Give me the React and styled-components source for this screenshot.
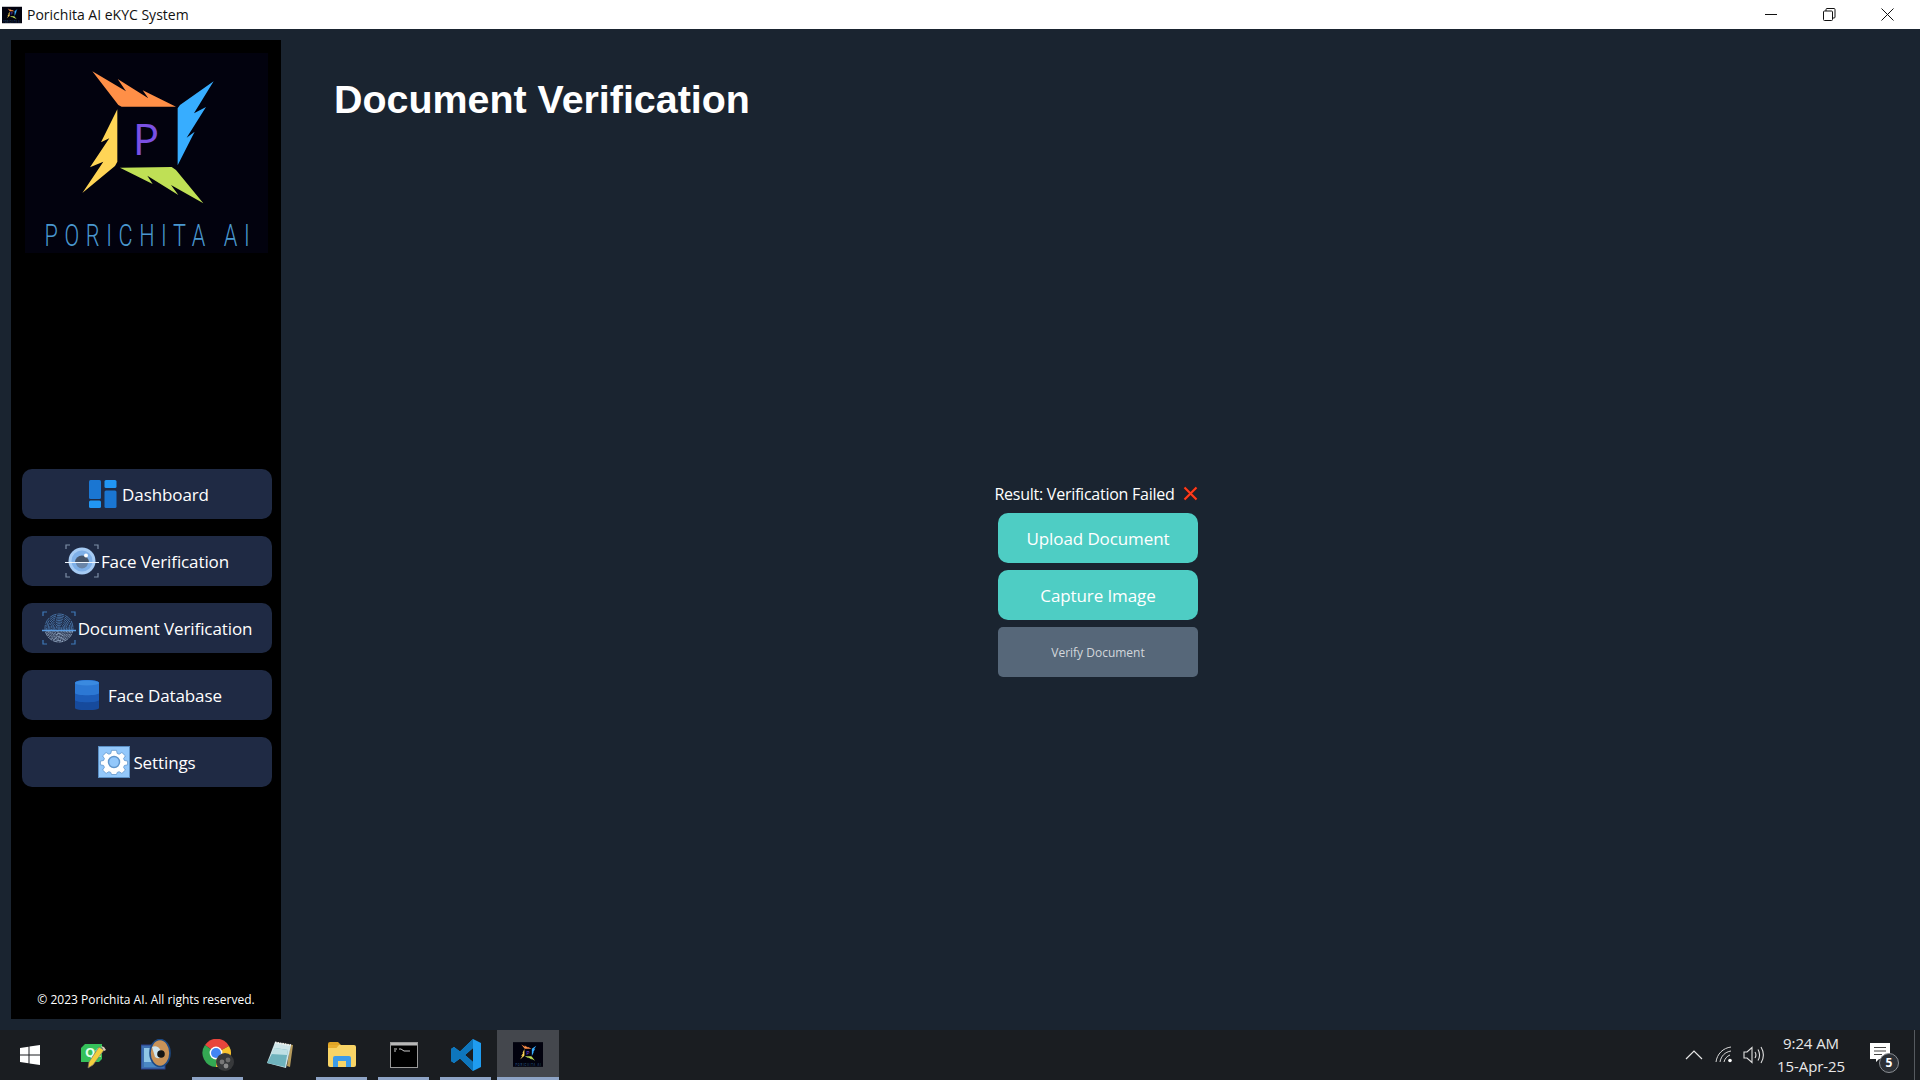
import React from "react";
import styled, { createGlobalStyle } from "styled-components";

const Global = createGlobalStyle`
  html, body { margin: 0; padding: 0; background: #1a2430; }
  * { box-sizing: border-box; }
  body { font-family: "Open Sans", "Noto Sans", "Liberation Sans", sans-serif; }
`;

const Screen = styled.div`
  width: 1920px;
  height: 1080px;
  display: flex;
  flex-direction: column;
  overflow: hidden;
  background: #1a2430;
`;

const TitleBar = styled.header`
  height: 29px;
  flex: none;
  background: #fff;
  display: flex;
  align-items: center;
  padding-left: 2px;
  color: #111;
`;

const WindowTitle = styled.span`
  margin-left: 5px;
  font: 14px/29px "Open Sans", sans-serif;
  flex: 1;
`;

const WindowControls = styled.div`
  display: flex;
  align-items: center;
  padding-right: 26px;
  gap: 45px;
`;

const Body = styled.div`
  flex: 1;
  display: flex;
  min-height: 0;
`;

const Sidebar = styled.aside`
  width: 270px;
  margin: 11px 0 11px 11px;
  background: #000;
  display: flex;
  flex-direction: column;
  padding: 13px 9px 0 11px;
`;

const LogoWrap = styled.div`
  margin: 0 -5px 0 3px;
  height: 200px;
`;

const Nav = styled.nav`
  margin-top: 216px;
  display: flex;
  flex-direction: column;
  gap: 17px;
`;

const NavButton = styled.button`
  width: 250px;
  height: 50px;
  border: 0;
  border-radius: 10px;
  background: #1f2a44;
  color: #fff;
  display: flex;
  align-items: center;
  justify-content: center;
  gap: ${(p) => p.$gap}px;
  font: 17px "Open Sans", sans-serif;
  letter-spacing: -0.1px;
  padding: 0 0 0 ${(p) => p.$inset}px;
`;

const Footer = styled.footer`
  margin-top: auto;
  padding: 0 2px 11px 0;
  color: #fff;
  font: 12px/16px "Open Sans", sans-serif;
  text-align: center;
`;

const Main = styled.main`
  flex: 1;
  display: flex;
  flex-direction: column;
  padding: 40px 58px 0 53px;
`;

const Heading = styled.h1`
  margin: 0;
  color: #fff;
  font: 700 39.4px/60px "Liberation Sans", Arial, sans-serif;
`;

const Stage = styled.section`
  margin-top: 354px;
  display: flex;
  flex-direction: column;
  align-items: center;
`;

const ResultRow = styled.div`
  display: flex;
  align-items: center;
  gap: 8px;
  height: 21px;
  color: #fff;
  font: 16px "Open Sans", sans-serif;
  letter-spacing: -0.25px;
  margin: 0 4px 9px 0;
`;

const ActionStack = styled.div`
  display: flex;
  flex-direction: column;
  gap: 7px;
`;

const ActionButton = styled.button`
  width: 200px;
  height: 50px;
  border: 0;
  padding: 0;
  border-radius: ${(p) => (p.$disabled ? 5 : 10)}px;
  background: ${(p) => (p.$disabled ? "#566779" : "#4ecdc4")};
  color: ${(p) => (p.$disabled ? "#d3d7dc" : "#fff")};
  font: ${(p) => (p.$disabled ? "12px" : "17px")} "Open Sans", sans-serif;
  letter-spacing: ${(p) => (p.$disabled ? "0" : "-0.1px")};
`;

const Taskbar = styled.footer`
  height: 50px;
  flex: none;
  background: #1a1d21;
  display: flex;
  align-items: stretch;
`;

const TaskStart = styled.div`
  width: 63px;
  padding-right: 3px;
  display: flex;
  align-items: center;
  justify-content: center;
`;

const TaskTile = styled.div`
  width: 62px;
  position: relative;
  display: flex;
  align-items: center;
  justify-content: center;
  padding-bottom: 1px;
  background: ${(p) => (p.$active ? "#44474d" : "transparent")};
  &::after {
    content: "";
    display: ${(p) => (p.$running || p.$active ? "block" : "none")};
    position: absolute;
    left: ${(p) => (p.$active ? 0 : 5)}px;
    right: ${(p) => (p.$active ? 0 : 6)}px;
    bottom: 0;
    height: 3px;
    background: #8ea4c6;
  }
`;

const Tray = styled.div`
  margin-left: auto;
  display: flex;
  align-items: center;
  color: #fff;
`;

const TrayIcons = styled.div`
  display: flex;
  align-items: center;
  gap: 8px;
  & > svg:first-child {
    margin-right: 4px;
  }
`;

const Clock = styled.div`
  width: 90px;
  margin-left: 1px;
  text-align: center;
  font: 15px/23px "Open Sans", sans-serif;
  letter-spacing: -0.1px;
  color: #e8e8e8;
`;

const Notification = styled.div`
  position: relative;
  width: 36px;
  height: 36px;
  margin-left: 12px;
`;

const Badge = styled.span`
  position: absolute;
  left: 11px;
  top: 16px;
  width: 20px;
  height: 20px;
  border-radius: 50%;
  border: 1px solid #8b8f94;
  background: #2c3036;
  color: #fff;
  font: 700 12px/18px "Open Sans", sans-serif;
  text-align: center;
`;

const TrayEdge = styled.div`
  width: 1px;
  height: 50px;
  margin-left: 10px;
  margin-right: 5px;
  background: #565a5f;
`;

function Logo({ width, height }) {
  return (
    <svg width={width} height={height} viewBox="0 0 243 200" style={{ display: "block" }}>
      <rect width="243" height="200" fill="#02020e" />
      <g transform="translate(45 7) scale(0.3333)">
        <polygon fill="#ff8f47" points="67,34 168,94 143,57 235,115 218,91 318,140 155,140 145,135" />
        <polygon fill="#37adff" points="431,64 372,160 408,141 350,233 374,215 323,316 323,145 330,135" />
        <polygon fill="#ffd556" points="142,148 142,305 135,318 37,399 100,305 60,322 118,235 93,247" />
        <polygon fill="#bfe055" points="150,323 305,321 318,330 400,430 303,375 325,405 232,347 248,372" />
        <text x="188" y="285" fill="#7a50e3" fontFamily="Open Sans, sans-serif" fontWeight="500" fontSize="132">P</text>
      </g>
      <g transform="scale(0.7 1)">
        <text x="28" y="193" fill="#4a98d0" fontFamily="Roboto, sans-serif" fontWeight="300" fontSize="31" textLength="293">PORICHITA AI</text>
      </g>
    </svg>
  );
}

const Brackets = ({ c }) => (
  <g fill="none" stroke={c} strokeWidth="1.2">
    <path d="M1 5V1h4M29 1h4v4M1 29v4h4M33 29v4h-4" />
  </g>
);

const DashboardIcon = () => (
  <svg width="28" height="28" viewBox="0 0 28 28">
    <rect x="0" y="0" width="12" height="19" rx="1.5" fill="#1a76d2" />
    <rect x="15.5" y="0" width="12" height="8" rx="1.5" fill="#2196f3" />
    <rect x="0" y="20.5" width="12" height="7.5" rx="1.5" fill="#2196f3" />
    <rect x="15.5" y="10.5" width="12" height="17.5" rx="1.5" fill="#1a76d2" />
  </svg>
);

const EyeIcon = () => (
  <svg width="34" height="34" viewBox="0 0 34 34">
    <Brackets c="#7d8ea6" />
    <circle cx="17" cy="17" r="13.5" fill="#a6cbf4" />
    <circle cx="17" cy="17" r="10.5" fill="#7fb0e8" />
    <path d="M10 18.5a7 7 0 0 1 14 0z" fill="#47566c" />
    <path d="M11 18.5h12a6 6 0 0 1-12 0z" fill="#6a85a8" />
    <circle cx="21" cy="11.5" r="2" fill="#fff" />
    <path d="M0 18.5h34" stroke="#eef5fd" strokeWidth="1.2" />
  </svg>
);

const FingerprintIcon = () => (
  <svg width="34" height="34" viewBox="0 0 34 34">
    <defs>
      <clipPath id="fpTop"><rect x="0" y="0" width="34" height="19.5" /></clipPath>
      <clipPath id="fpBottom"><rect x="0" y="19.5" width="34" height="15" /></clipPath>
    </defs>
    <Brackets c="#3f79b8" />
    <g fill="none" clipPath="url(#fpTop)" stroke="#4f82ba" strokeWidth="0.8">
      {[14, 12.4, 10.8, 9.2, 7.6, 6, 4.4, 2.8, 1.2].map((r) => (
        <circle key={r} cx="17" cy="17" r={r} strokeDasharray="7 1" />
      ))}
    </g>
    <g fill="none" clipPath="url(#fpBottom)" stroke="#b9d0ea" strokeWidth="0.7">
      {[14, 12.6, 11.2, 9.8, 8.4, 7, 5.6, 4.2, 2.8, 1.4].map((r) => (
        <circle key={r} cx="17" cy="17" r={r} strokeDasharray="5 .8" />
      ))}
    </g>
    <path d="M0 19.5h34" stroke="#5a9be0" strokeWidth="1.3" />
  </svg>
);

const DatabaseIcon = () => (
  <svg width="24" height="30" viewBox="0 0 24 30">
    <path d="M0 3c0-4 24-4 24 0v25c0 3-24 3-24 0z" fill="#164a9c" />
    <path d="M0 3c0-4 24-4 24 0v17c0 3-24 3-24 0z" fill="#1c5cb8" />
    <path d="M0 3c0-4 24-4 24 0v10c0 3-24 3-24 0z" fill="#2c78d4" />
    <ellipse cx="12" cy="3" rx="12" ry="2.4" fill="#3a8ae0" />
  </svg>
);

const GearIcon = () => (
  <svg width="32" height="32" viewBox="0 0 32 32">
    <rect x="0.5" y="0.5" width="31" height="31" fill="#93c8fb" stroke="#5b8fc4" />
    <path
      fill="#fff"
      stroke="#5f95cc"
      strokeWidth="0.8"
      d="M13.5 5h5l.7 3.2 1.9.8 2.8-1.8 3.5 3.5-1.8 2.8.8 1.9 3.2.7v3.8l-3.2.7-.8 1.9 1.8 2.8-3.5 3.5-2.8-1.8-1.9.8-.7 2.1h-5l-.7-2.1-1.9-.8-2.8 1.8-3.5-3.5 1.8-2.8-.8-1.9-3.2-.7v-3.8l3.2-.7.8-1.9-1.8-2.8 3.5-3.5 2.8 1.8 1.9-.8z"
      transform="translate(0 -.5) scale(1 .97)"
    />
    <circle cx="16" cy="16" r="5.5" fill="#93c8fb" stroke="#5f95cc" strokeWidth="1.4" />
  </svg>
);

const CrossIcon = () => (
  <svg width="15" height="15" viewBox="0 0 15 15">
    <path d="M1.5 1.5l12 12M13.5 1.5l-12 12" stroke="#5a1408" strokeWidth="3" />
    <path d="M1.5 1.5l12 12M13.5 1.5l-12 12" stroke="#ff3d1e" strokeWidth="2" />
  </svg>
);

const MinimizeGlyph = () => (
  <svg width="13" height="13" viewBox="0 0 13 13"><path d="M0 6.5h12" stroke="#111" /></svg>
);
const RestoreGlyph = () => (
  <svg width="13" height="13" viewBox="0 0 13 13" fill="none" stroke="#111">
    <rect x="0.5" y="3" width="9" height="9.5" rx="1" />
    <path d="M3 3V1.5a1 1 0 0 1 1-1h7a1 1 0 0 1 1 1V9a1 1 0 0 1-1 1H9.5" />
  </svg>
);
const CloseGlyph = () => (
  <svg width="13" height="13" viewBox="0 0 13 13"><path d="M.5.5l12 12M12.5.5l-12 12" stroke="#111" /></svg>
);

const WindowsIcon = () => (
  <svg width="20" height="20" viewBox="0 0 20 20" fill="#fff">
    <polygon points="0,3 8.5,1.8 8.5,9.5 0,9.5" />
    <polygon points="9.5,1.6 20,0 20,9.5 9.5,9.5" />
    <polygon points="0,10.5 8.5,10.5 8.5,18.2 0,17" />
    <polygon points="9.5,10.5 20,10.5 20,20 9.5,18.4" />
  </svg>
);

const QtIcon = () => (
  <svg width="26" height="28" viewBox="0 0 26 28">
    <path d="M4 3h17v15l-3 3H0V7z" fill="#35c15a" />
    <text x="4" y="16" fill="#e6ffe8" fontFamily="Open Sans, sans-serif" fontWeight="700" fontSize="13">Qt</text>
    <path d="M18 6l5 3-11 15-5 3 1-6z" fill="#f2cf3e" stroke="#7c7468" strokeWidth="0.7" />
    <path d="M20 5l3 1 2 3-2 1z" fill="#d8c8b8" />
  </svg>
);

const EyeAppIcon = () => (
  <svg width="30" height="32" viewBox="0 0 30 32">
    <rect x="0" y="6" width="24" height="24" fill="#3d6fb0" stroke="#2a3f8a" />
    <rect x="3" y="9" width="18" height="14" fill="#8fc6e6" />
    <rect x="3" y="23" width="18" height="5" fill="#4a88c4" />
    <ellipse cx="19" cy="14" rx="10" ry="13.5" fill="#c89258" stroke="#1c4a86" strokeWidth="1.6" />
    <path d="M11 8c6-3 9 3 10 7-1 5-4 5-7 3z" fill="#cfe4ee" />
    <circle cx="20" cy="15" r="3.8" fill="#141414" />
  </svg>
);

const ChromeIcon = () => (
  <svg width="32" height="32" viewBox="0 0 32 32">
    <path d="M14 14L3 6a14 14 0 0 1 24 1z" fill="#e8453c" />
    <path d="M14 14l13-7a14 14 0 0 1-13 21z" fill="#f8c22e" />
    <path d="M14 14v14A14 14 0 0 1 3 6z" fill="#34a853" />
    <circle cx="14" cy="14" r="6.4" fill="#fff" />
    <circle cx="14" cy="14" r="5" fill="#4285f4" />
    <circle cx="23" cy="23" r="9" fill="#37393b" />
    <circle cx="20" cy="23" r="2.4" fill="#777" />
    <circle cx="26" cy="21" r="2.4" fill="#6c6c6c" />
    <circle cx="24" cy="27" r="2.4" fill="#8a8a8a" />
  </svg>
);

const NotepadIcon = () => (
  <svg width="28" height="30" viewBox="0 0 28 30">
    <polygon points="9,2 27,5 24,27 21,26 24,6" fill="#b59a5c" />
    <polygon points="9,2 25,5 20,28 1,23" fill="#cfe6ea" />
    <polygon points="9,8 22,10 19,27 1,23" fill="#6fb3bd" />
    <polygon points="9,8 22,10 21,15 5,14" fill="#bfe0e4" />
    <path d="M9 2.5l16 2.8" stroke="#f2f2f2" strokeWidth="2" strokeDasharray="1.5 1" />
  </svg>
);

const FolderIcon = () => (
  <svg width="28" height="26" viewBox="0 0 28 26">
    <path d="M0 2a2 2 0 0 1 2-2h8l3 3h-13z" fill="#e0a526" />
    <path d="M0 3h26a2 2 0 0 1 2 2v18a2 2 0 0 1-2 2H2a2 2 0 0 1-2-2z" fill="#f8d466" />
    <path d="M0 3h11l-2.5 3H0z" fill="#e8ae2e" />
    <path d="M5 25v-9a2 2 0 0 1 2-2h14a2 2 0 0 1 2 2v9h-5v-6h-8v6z" fill="#3d9be8" />
  </svg>
);

const ConsoleIcon = () => (
  <svg width="28" height="26" viewBox="0 0 28 26">
    <rect x="0.5" y="0.5" width="27" height="25" fill="#000" stroke="#9a9a9a" />
    <rect x="1" y="1" width="26" height="2.5" fill="#b8b8b8" />
    <path d="M4 7h3M4 9h2M9 7h2l3 2h6" stroke="#c8c8c8" strokeWidth="1" fill="none" />
  </svg>
);

const CodeIcon = () => (
  <svg width="30" height="32" viewBox="0 0 30 32">
    <path d="M22 0l8 4v24l-8 4-13-12.5L3 24l-3-2v-12l3-2 6 4.5zM22 9l-8 7 8 7z" fill="#1f9cf0" fillRule="evenodd" />
    <path d="M22 0L9 12.5 3 8l-3 2v12l3 2 6-4.5L22 32v-9l-8-7 8-7z" fill="#0e76bd" />
  </svg>
);

const ChevronGlyph = () => (
  <svg width="18" height="10" viewBox="0 0 18 10"><path d="M1 9l8-8 8 8" fill="none" stroke="#e8e8e8" strokeWidth="1.2" /></svg>
);
const WifiGlyph = () => (
  <svg width="20" height="18" viewBox="0 0 20 18" fill="none" stroke="#d8d8d8" strokeWidth="1">
    <path d="M1 16C2 8 8 2 16 1M5 16C6 10 10 6 16 5M9 16c.6-3 3-6 6-7" />
    <circle cx="15" cy="14.5" r="1.8" fill="#fff" stroke="none" />
  </svg>
);
const SpeakerGlyph = () => (
  <svg width="22" height="20" viewBox="0 0 22 20" fill="none" stroke="#e0e0e0" strokeWidth="1.1">
    <path d="M1 7h3l5-4.5v15L4 13H1z" />
    <path d="M12 7c1.2 2 1.2 4 0 6M15 4.5c2 3.5 2 7.5 0 11M18 2c3 5 3 11 0 16" />
  </svg>
);

const ChatGlyph = () => (
  <svg width="20" height="22" viewBox="0 0 20 22" style={{ display: "block", margin: "6px 0 0 2px" }}>
    <path d="M0 0h20v16H9l-3 3v-3H0z" fill="#fff" />
    <path d="M4 4.5h12M4 8h12M4 11.5h8" stroke="#444" strokeWidth="1" />
  </svg>
);

const navItems = [
  { label: "Dashboard", Icon: DashboardIcon, gap: 5, inset: 4 },
  { label: "Face Verification", Icon: EyeIcon, gap: 2, inset: 0 },
  { label: "Document Verification", Icon: FingerprintIcon, gap: 2, inset: 0 },
  { label: "Face Database", Icon: DatabaseIcon, gap: 9, inset: 3 },
  { label: "Settings", Icon: GearIcon, gap: 3, inset: 0 },
];

const taskApps = [
  { key: "qt", Icon: QtIcon },
  { key: "eye", Icon: EyeAppIcon },
  { key: "chrome", Icon: ChromeIcon, running: true },
  { key: "notepad", Icon: NotepadIcon },
  { key: "folder", Icon: FolderIcon, running: true },
  { key: "console", Icon: ConsoleIcon, running: true },
  { key: "code", Icon: CodeIcon, running: true },
];

export default function App() {
  return (
    <Screen>
      <Global />
      <TitleBar>
        <Logo width={20} height={20} />
        <WindowTitle>Porichita AI eKYC System</WindowTitle>
        <WindowControls>
          <MinimizeGlyph />
          <RestoreGlyph />
          <CloseGlyph />
        </WindowControls>
      </TitleBar>
      <Body>
        <Sidebar>
          <LogoWrap>
            <Logo width={243} height={200} />
          </LogoWrap>
          <Nav>
            {navItems.map(({ label, Icon, gap, inset }) => (
              <NavButton key={label} $gap={gap} $inset={inset}>
                <Icon />
                {label}
              </NavButton>
            ))}
          </Nav>
          <Footer>© 2023 Porichita AI. All rights reserved.</Footer>
        </Sidebar>
        <Main>
          <Heading>Document Verification</Heading>
          <Stage>
            <ResultRow>
              Result: Verification Failed
              <CrossIcon />
            </ResultRow>
            <ActionStack>
              <ActionButton>Upload Document</ActionButton>
              <ActionButton>Capture Image</ActionButton>
              <ActionButton $disabled>Verify Document</ActionButton>
            </ActionStack>
          </Stage>
        </Main>
      </Body>
      <Taskbar>
        <TaskStart>
          <WindowsIcon />
        </TaskStart>
        {taskApps.map(({ key, Icon, running }) => (
          <TaskTile key={key} $running={running}>
            <Icon />
          </TaskTile>
        ))}
        <TaskTile $active>
          <Logo width={30} height={25} />
        </TaskTile>
        <Tray>
          <TrayIcons>
            <ChevronGlyph />
            <WifiGlyph />
            <SpeakerGlyph />
          </TrayIcons>
          <Clock>
            9:24 AM
            <br />
            15-Apr-25
          </Clock>
          <Notification>
            <ChatGlyph />
            <Badge>5</Badge>
          </Notification>
          <TrayEdge />
        </Tray>
      </Taskbar>
    </Screen>
  );
}
